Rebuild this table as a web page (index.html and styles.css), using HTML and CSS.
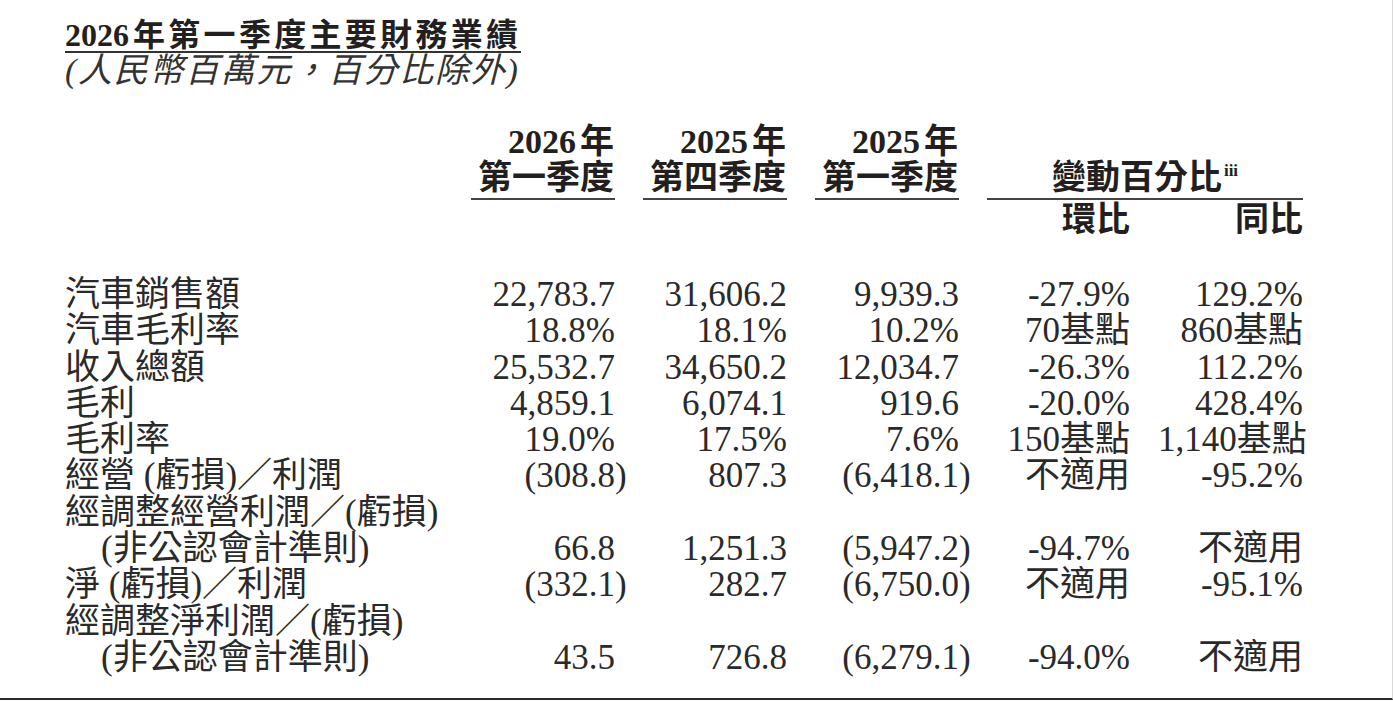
FILE: index.html
```html
<!DOCTYPE html>
<html lang="zh-Hant">
<head>
<meta charset="utf-8">
<title>2026年第一季度主要財務業績</title>
<link rel="stylesheet" href="styles.css">
</head>
<body>
<div class="page">
  <h1 class="title"><span><span class="digits">2026</span><span class="yr">年</span>第一季度主要財務業績</span></h1>
  <p class="subtitle">(人民幣百萬元，百分比除外)</p>

  <div class="table">
    <div class="cell"></div>
    <div class="cell head-col">2026<span class="yr">年</span><br>第一季度</div>
    <div class="cell head-col">2025<span class="yr">年</span><br>第四季度</div>
    <div class="cell head-col">2025<span class="yr">年</span><br>第一季度</div>
    <div class="cell head-change">變動百分比<sup>iii</sup></div>

    <div class="cell sub-head qoq">環比</div>
    <div class="cell sub-head yoy">同比</div>

    <div class="spacer"></div>

    <div class="cell label">汽車銷售額</div>
    <div class="cell num">22,783.7</div>
    <div class="cell num">31,606.2</div>
    <div class="cell num">9,939.3</div>
    <div class="cell num">-27.9%</div>
    <div class="cell num">129.2%</div>

    <div class="cell label">汽車毛利率</div>
    <div class="cell num">18.8%</div>
    <div class="cell num">18.1%</div>
    <div class="cell num">10.2%</div>
    <div class="cell num">70基點</div>
    <div class="cell num">860基點</div>

    <div class="cell label">收入總額</div>
    <div class="cell num">25,532.7</div>
    <div class="cell num">34,650.2</div>
    <div class="cell num">12,034.7</div>
    <div class="cell num">-26.3%</div>
    <div class="cell num">112.2%</div>

    <div class="cell label">毛利</div>
    <div class="cell num">4,859.1</div>
    <div class="cell num">6,074.1</div>
    <div class="cell num">919.6</div>
    <div class="cell num">-20.0%</div>
    <div class="cell num">428.4%</div>

    <div class="cell label">毛利率</div>
    <div class="cell num">19.0%</div>
    <div class="cell num">17.5%</div>
    <div class="cell num">7.6%</div>
    <div class="cell num">150基點</div>
    <div class="cell num">1,140基點</div>

    <div class="cell label">經營 (虧損)／利潤</div>
    <div class="cell num">(308.8<span class="hang">)</span></div>
    <div class="cell num">807.3</div>
    <div class="cell num">(6,418.1<span class="hang">)</span></div>
    <div class="cell num">不適用</div>
    <div class="cell num">-95.2%</div>

    <div class="cell label">經調整經營利潤／(虧損)<br><span class="indent">(非公認會計準則)</span></div>
    <div class="cell num">66.8</div>
    <div class="cell num">1,251.3</div>
    <div class="cell num">(5,947.2<span class="hang">)</span></div>
    <div class="cell num">-94.7%</div>
    <div class="cell num">不適用</div>

    <div class="cell label">淨 (虧損)／利潤</div>
    <div class="cell num">(332.1<span class="hang">)</span></div>
    <div class="cell num">282.7</div>
    <div class="cell num">(6,750.0<span class="hang">)</span></div>
    <div class="cell num">不適用</div>
    <div class="cell num">-95.1%</div>

    <div class="cell label">經調整淨利潤／(虧損)<br><span class="indent">(非公認會計準則)</span></div>
    <div class="cell num">43.5</div>
    <div class="cell num">726.8</div>
    <div class="cell num">(6,279.1<span class="hang">)</span></div>
    <div class="cell num">-94.0%</div>
    <div class="cell num">不適用</div>
  </div>
</div>
</body>
</html>
```

FILE: styles.css
```css
html, body {
  margin: 0;
  padding: 0;
  background: #ffffff;
}

body {
  color: #231f20;
  font-family: "Liberation Serif", "Noto Sans CJK TC", serif;
}

.page {
  width: 1393px;
  height: 700px;
  box-sizing: border-box;
  border-right: 1px solid #d9d9d9;
  border-bottom: 2px solid #2b2b2b;
  padding: 19px 0 0 65px;
  overflow: hidden;
}

.title {
  margin: 0;
  font-size: 32px;
  font-weight: 700;
  line-height: 32px;
}

.title > span {
  display: inline-block;
  padding-bottom: 0;
  border-bottom: 2px solid #333333;
  letter-spacing: 3.3px;
}

.title .digits {
  letter-spacing: 0;
}

.yr {
  margin-left: 4px;
}

.subtitle {
  margin: 1px 0 0;
  font-size: 34px;
  font-style: italic;
  line-height: 34px;
  letter-spacing: 1.7px;
  color: #333333;
}

.table {
  margin-top: 36px;
  display: grid;
  grid-template-columns: 378px 144px 144px 144px 143px 145px;
  column-gap: 28px;
  font-size: 35px;
  line-height: 36.3px;
}

.cell {
  white-space: nowrap;
}

.head-col {
  font-size: 34px;
  font-weight: 700;
  line-height: 36px;
  text-align: right;
  padding: 0 1px 2px 0;
  border-bottom: 2px solid #444444;
}

.head-change {
  grid-column: span 2;
  align-self: end;
  font-size: 34px;
  font-weight: 700;
  line-height: 36px;
  text-align: center;
  padding-bottom: 2px;
  border-bottom: 2px solid #444444;
}

.head-change sup {
  font-size: 17px;
  line-height: 0;
  vertical-align: 13px;
  margin-left: 2px;
}

.sub-head {
  margin-top: 2px;
  font-size: 34px;
  font-weight: 700;
  line-height: 36px;
  text-align: right;
}

.qoq {
  grid-column: 5;
}

.yoy {
  grid-column: 6;
}

.spacer {
  grid-column: 1 / -1;
  height: 39px;
}

.label {
  color: #2a2a2a;
}

.indent {
  padding-left: 36px;
}

.num {
  align-self: end;
  text-align: right;
  color: #2a2a2a;
}

.hang {
  margin-right: -0.333em;
}
```
